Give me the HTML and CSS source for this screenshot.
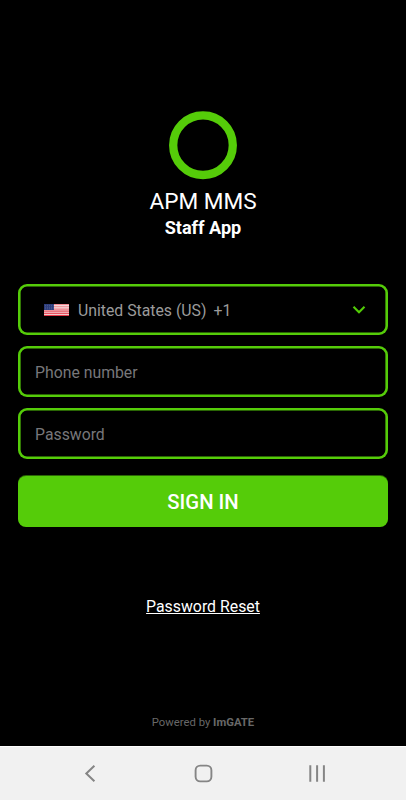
FILE: index.html
```html
<!DOCTYPE html>
<html lang="en">
<head>
<meta charset="utf-8">
<title>APM MMS Staff App</title>
<link rel="stylesheet" href="styles.css">
</head>
<body>
<main class="screen">
  <header class="brand">
    <svg class="ring" viewBox="0 0 68 68"><circle cx="34" cy="34.2" r="29.8" fill="none" stroke="#55cc09" stroke-width="8.3"/></svg>
    <h1 class="title">APM MMS</h1>
    <p class="subtitle">Staff App</p>
  </header>
  <form class="form">
    <div class="field country">
      <svg class="flag" viewBox="0 0 25 13" preserveAspectRatio="none">
        <rect width="25" height="13" fill="#f4eeee"/>
        <path d="M0 .5H25M0 2.5H25M0 4.5H25" stroke="#ef8088"/>
        <path d="M0 6.5H25M0 8.5H25M0 10.5H25M0 12.5H25" stroke="#e52a3a"/>
        <rect width="10" height="6.5" fill="#2d3d7c"/>
        <path d="M1 1.5H10M1 3.5H10M1 5.2H10" stroke="#66719f" stroke-width=".6" stroke-dasharray="1 1"/>
      </svg>
      <span class="country-name">United States (US)</span>
      <span class="dial">+1</span>
      <svg class="chevron" viewBox="0 0 14 10"><path d="M1.5 1.8 7 7.3l5.5-5.5" fill="none" stroke="#52cc06" stroke-width="2.1"/></svg>
    </div>
    <div class="field"><span class="placeholder">Phone number</span></div>
    <div class="field"><span class="placeholder">Password</span></div>
    <button class="submit" type="button">SIGN IN</button>
  </form>
  <a class="reset">Password Reset</a>
  <footer class="powered">Powered by <b>ImGATE</b></footer>
</main>
<nav class="navbar">
  <svg class="nav-icon" viewBox="0 0 24 24"><path d="M17.4 3.7 9.3 11.5l8.1 7.8" fill="none" stroke="#858585" stroke-width="2"/></svg>
  <svg class="nav-icon" viewBox="0 0 24 24"><rect x="4.6" y="3.6" width="15.8" height="15.8" rx="4.6" fill="none" stroke="#858585" stroke-width="1.9"/></svg>
  <svg class="nav-icon" viewBox="0 0 24 24"><path d="M5.3 3.2V19.7M12.1 3.2V19.7M18.9 3.2V19.7" stroke="#858585" stroke-width="2"/></svg>
</nav>
</body>
</html>
```
FILE: styles.css
```css
* { box-sizing: border-box; }
body {
  margin: 0;
  height: 800px;
  display: flex;
  flex-direction: column;
  background: #000;
  color: #fff;
  font-family: Roboto, "Liberation Sans", sans-serif;
}
.screen {
  height: 746px;
  padding: 111px 18px 0;
  display: flex;
  flex-direction: column;
  align-items: center;
}
.brand {
  height: 173px;
  display: flex;
  flex-direction: column;
  align-items: center;
}
.ring {
  width: 68px;
  height: 68px;
  overflow: visible;
}
.title {
  margin: 9px 0 0;
  font-size: 22.6px;
  line-height: 28px;
  font-weight: 400;
}
.subtitle {
  margin: 0;
  font-size: 18.1px;
  line-height: 24px;
  font-weight: 700;
}
.form {
  width: 370px;
  display: flex;
  flex-direction: column;
  gap: 11px;
}
.field {
  height: 51px;
  box-shadow: inset 0 0 0 2.6px #55cc09;
  border-radius: 9px;
  padding: 2px 17px 0;
  display: flex;
  align-items: center;
  font-size: 15.8px;
  line-height: 20px;
  color: #9b9b9b;
}
.country { padding: 2px 22px 0 26px; }
.flag {
  width: 25px;
  height: 12px;
  margin: 0 9px 2px 0;
}
.dial { margin-left: 7px; }
.chevron {
  width: 14px;
  height: 10px;
  margin: 0 0 2px auto;
}
.placeholder { color: #77777a; }
.submit {
  height: 51px;
  margin-top: 6px;
  padding: 1px 0 0;
  border: 0;
  border-radius: 8px;
  background: #55cc09;
  box-shadow: 0 -1px 0 #2b6605;
  color: #fff;
  font: 500 20.3px/24px Roboto, "Liberation Sans", sans-serif;
}
.reset {
  margin-top: 70px;
  font-size: 15.85px;
  line-height: 20px;
  text-decoration: underline;
}
.powered {
  margin-top: 98px;
  font-size: 11.3px;
  line-height: 16px;
  color: #686868;
}
.navbar {
  height: 54px;
  padding: 0 77px;
  border-top: 1px solid #fff;
  background: #f1f1f1;
  display: flex;
  align-items: center;
  justify-content: space-between;
}
.nav-icon {
  width: 24px;
  height: 24px;
}
```
